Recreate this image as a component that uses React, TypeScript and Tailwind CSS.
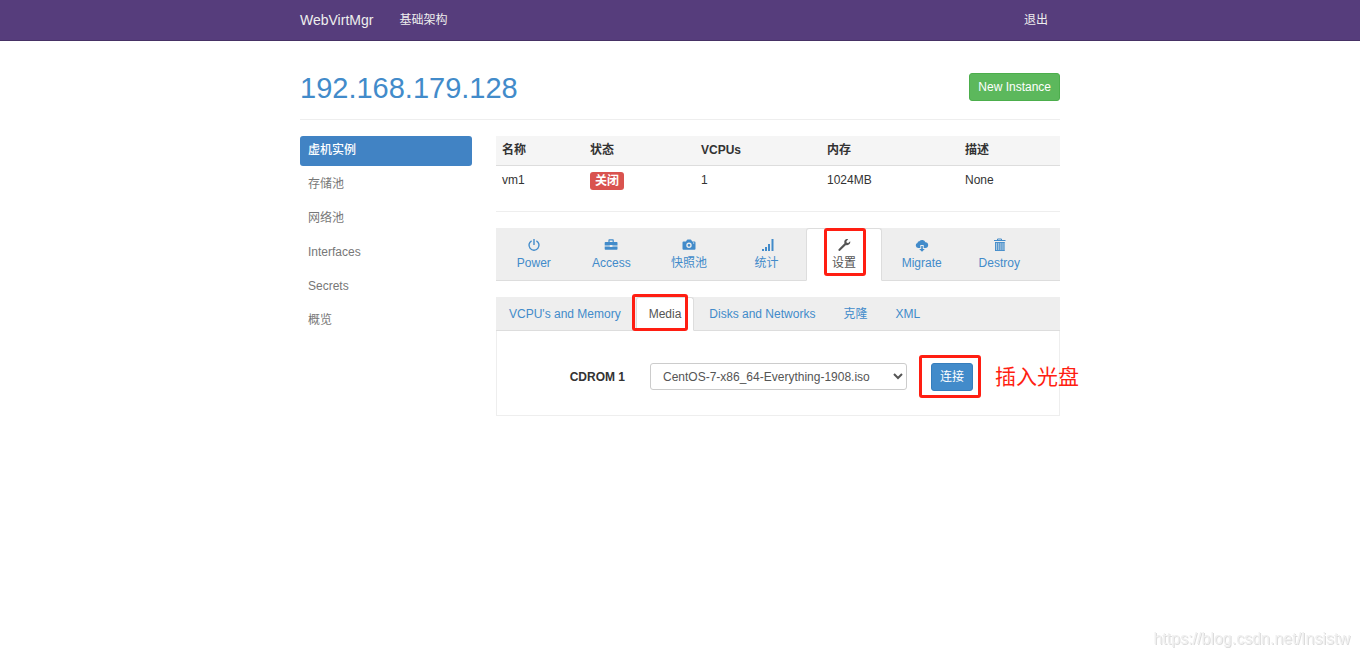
import { useState, type ReactNode } from "react";
import { clsx } from "clsx";

const SIDEBAR = ["虚机实例", "存储池", "网络池", "Interfaces", "Secrets", "概览"];

const INSTANCE = {
  name: "vm1",
  status: "关闭",
  vcpus: 1,
  memory: "1024MB",
  description: "None",
};

const SETTINGS = [
  "VCPU's and Memory",
  "Media",
  "Disks and Networks",
  "克隆",
  "XML",
];

const ISO_IMAGES = ["CentOS-7-x86_64-Everything-1908.iso"];

const ACTIONS: { label: string; icon: ReactNode }[] = [
  {
    label: "Power",
    icon: (
      <Icon>
        <path
          d="M4.6 2.8a5 5 0 1 0 4.8 0M7 1v6"
          fill="none"
          stroke="currentColor"
          strokeWidth="1.4"
        />
      </Icon>
    ),
  },
  {
    label: "Access",
    icon: (
      <Icon>
        <path
          fillRule="evenodd"
          d="M4.4 4V2.2Q4.4 1.3 5.2 1.300h3.800q.8 0 .8.9V4h3q.7 0 .7.700V7.600H8.400V6.900H5.800V7.600H.7V4.700Q.7 4 1.400 4zm1.200 0h3V2.400h-3zM.7 8.400h5.100v.6h2.600v-.6h5.100v2.700q0 .7-.7.700H1.400q-.7 0-.7-.7z"
        />
      </Icon>
    ),
  },
  {
    label: "快照池",
    icon: (
      <Icon>
        <path
          fillRule="evenodd"
          d="M4 3.500l.9-1.400q.2-.5.800-.5h2.800q.6 0 .8.500l.9 1.400h2.300q1 0 1 1v6.300q0 1-1 1h-11q-1 0-1-1V4.500q0-1 1-1zM7 4.600a2.700 2.700 0 1 0 0 5.400 2.700 2.700 0 0 0 0-5.400zm0 1.300a1.400 1.400 0 1 1 0 2.800 1.400 1.400 0 0 1 0-2.800zM11 4.500v1h1.200v-1z"
        />
      </Icon>
    ),
  },
  {
    label: "统计",
    icon: (
      <Icon>
        <path d="M2 11h2v2H2zM5 9h2v4H5zM8 6h2v7H8zM11.500 1h2v12h-2z" />
      </Icon>
    ),
  },
  {
    label: "设置",
    icon: (
      <Icon>
        <path d="M13.200 3.300 11.200 5.100 9.700 4.700 9.400 3.300 11.200 1.200C9.600.8 8.100 1.400 7.500 2.800c-.4.900-.2 1.700 0 2.400L1.600 11.200c-.8.900.5 2.300 1.400 1.500L9 7c1.300.4 2.700.1 3.500-.9.700-.8.900-1.800.7-2.800z" />
      </Icon>
    ),
  },
  {
    label: "Migrate",
    icon: (
      <Icon>
        <path d="M5.300 10H3.200A2.700 2.700 0 0 1 .8 7.400c0-1.300.8-2.200 1.800-2.400-.1-1.100.8-1.900 1.800-1.700A3.400 3.400 0 0 1 10.400 4.300c1.700-.1 2.800 1.100 2.800 2.700 0 1.700-1.200 3-2.700 3H8.700V7H5.300zM6.200 8h1.600v3h2L7 13.800 4.200 11h2z" />
      </Icon>
    ),
  },
  {
    label: "Destroy",
    icon: (
      <Icon>
        <path
          d="M5.500 2V1h4v1M2 2.500h11.500"
          fill="none"
          stroke="currentColor"
        />
        <path d="M3 4h9.500v9H3z" fillOpacity="0.4" />
        <path
          d="M3.500 4v9M5.600 5v7M7.750 5v7M9.900 5v7M12 4v9M3 4.500h9.500M3 12.500h9.500"
          fill="none"
          stroke="currentColor"
          strokeWidth="0.9"
        />
      </Icon>
    ),
  },
];

function Icon({ children }: { children: ReactNode }) {
  return (
    <svg
      viewBox="0 0 14 14"
      className="size-[14px]"
      fill="currentColor"
      aria-hidden="true"
    >
      {children}
    </svg>
  );
}

// red frame that marks a step of the walkthrough
function Marker({ className }: { className: string }) {
  return (
    <span
      className={clsx(
        "pointer-events-none absolute z-10 rounded-[3px] border-3 border-[#ff1e12]",
        className,
      )}
    />
  );
}

export default function App() {
  const [section, setSection] = useState("虚机实例");
  const [action, setAction] = useState("设置");
  const [setting, setSetting] = useState("Media");

  return (
    <div className="min-h-screen bg-white font-['Liberation_Sans','Noto_Sans_CJK_SC',sans-serif] text-xs text-[#333]">
      <nav className="border-b border-[#463265] bg-[#563d7c] text-[#eee]">
        <div className="mx-auto flex h-10 max-w-[760px] items-center">
          <a href="#" className="text-sm">
            WebVirtMgr
          </a>
          <a href="#" className="ml-[26px]">
            基础架构
          </a>
          <a href="#" className="mr-3 ml-auto">
            退出
          </a>
        </div>
      </nav>

      <main className="mx-auto max-w-[760px]">
        <header className="flex items-start justify-between border-b border-[#eee] pt-8 pb-4">
          <h1 className="text-[29px] leading-[30px] text-[#428bca]">
            <a href="#">192.168.179.128</a>
          </h1>
          <button
            type="button"
            className="h-7 rounded-[3px] border border-[#4cae4c] bg-[#5cb85c] px-2 text-white"
          >
            New Instance
          </button>
        </header>

        <div className="mt-4 flex gap-6">
          <ul className="w-[172px] shrink-0 space-y-1">
            {SIDEBAR.map((item) => (
              <li key={item}>
                <a
                  href="#"
                  onClick={() => setSection(item)}
                  className={clsx(
                    "block h-[30px] rounded-[3px] px-2 leading-[29px]",
                    item === section
                      ? "bg-[#4183c4] font-medium text-white"
                      : "text-[#777]",
                  )}
                >
                  {item}
                </a>
              </li>
            ))}
          </ul>

          <div className="min-w-0 flex-1">
            <InstanceTable />

            <ul className="mt-4 flex border-b border-[#ddd] bg-[#eee] pr-[21px]">
              {ACTIONS.map(({ label, icon }) => (
                <li key={label} className="relative -mb-px flex-1 pr-[2px]">
                  <a
                    href="#"
                    onClick={() => setAction(label)}
                    className={clsx(
                      "flex h-[53px] flex-col items-center rounded-t-[3px] border pt-[9px]",
                      label === action
                        ? "border-[#ddd] border-b-white bg-white text-[#555]"
                        : "border-transparent border-b-[#ddd] text-[#428bca]",
                    )}
                  >
                    {icon}
                    <span className="mt-[2px] leading-[18px]">{label}</span>
                  </a>
                  {label === "设置" && (
                    <Marker className="top-0 left-[18px] h-12 w-[42px]" />
                  )}
                </li>
              ))}
            </ul>

            <ul className="mt-4 flex border-b border-[#ddd] bg-[#eee]">
              {SETTINGS.map((label) => (
                <li key={label} className="relative -mb-px pr-[2px]">
                  <a
                    href="#"
                    onClick={() => setSetting(label)}
                    className={clsx(
                      "block rounded-t-[3px] border px-3 leading-8",
                      label === setting
                        ? "border-[#ddd] border-b-white bg-white text-[#555]"
                        : "border-transparent border-b-[#ddd] text-[#428bca]",
                    )}
                  >
                    {label}
                  </a>
                  {label === "Media" && (
                    <Marker className="-top-[3px] -left-1 h-[37px] w-14" />
                  )}
                </li>
              ))}
            </ul>

            <MediaPanel />
          </div>
        </div>
      </main>

      <div className="fixed right-[10px] bottom-[8px] text-base leading-5 text-[#f0f0f0] [text-shadow:1px_1px_0_#dcdcdc]">
        https://blog.csdn.net/Insistw
      </div>
    </div>
  );
}

function InstanceTable() {
  return (
    <div className="border-b border-[#eee] pb-[17px]">
      <table className="w-full table-fixed text-left leading-4">
        <thead className="border-b border-[#ddd] bg-[#f5f5f5]">
          <tr>
            <th className="w-[88px] px-[6px] pt-[6px] pb-[7px]">名称</th>
            <th className="w-[111px] px-[6px] pt-[6px] pb-[7px]">状态</th>
            <th className="w-[126px] px-[6px] pt-[6px] pb-[7px]">VCPUs</th>
            <th className="w-[138px] px-[6px] pt-[6px] pb-[7px]">内存</th>
            <th className="px-[6px] pt-[6px] pb-[7px]">描述</th>
          </tr>
        </thead>
        <tbody>
          <tr>
            <td className="px-[6px] py-[6px]">{INSTANCE.name}</td>
            <td className="px-[6px] pt-[6px] pb-1">
              <span className="block w-fit rounded-[3px] bg-[#d9534f] px-[5px] leading-[18px] font-bold text-white">
                {INSTANCE.status}
              </span>
            </td>
            <td className="px-[6px]">{INSTANCE.vcpus}</td>
            <td className="px-[6px]">{INSTANCE.memory}</td>
            <td className="px-[6px]">{INSTANCE.description}</td>
          </tr>
        </tbody>
      </table>
    </div>
  );
}

function MediaPanel() {
  return (
    <form
      onSubmit={(e) => e.preventDefault()}
      className="flex items-start border border-t-0 border-[#eee] pt-8 pb-6"
    >
      <label
        htmlFor="cdrom1"
        className="w-[128px] text-right leading-7 font-bold"
      >
        CDROM 1
      </label>
      <select
        id="cdrom1"
        className="ml-[25px] h-[27px] w-[257px] rounded-[3px] border border-[#ccc] bg-white px-2 text-[#555]"
      >
        {ISO_IMAGES.map((iso) => (
          <option key={iso}>{iso}</option>
        ))}
      </select>
      <div className="relative ml-6">
        <button
          type="submit"
          className="block h-7 w-[42px] rounded-[3px] border border-[#357ebd] bg-[#428bca] text-white"
        >
          连接
        </button>
        <Marker className="-top-2 -left-3 h-[43px] w-[62px]" />
        <span className="absolute top-0 left-16 text-[21px] leading-7 whitespace-nowrap text-[#ff1e12]">
          插入光盘
        </span>
      </div>
    </form>
  );
}
